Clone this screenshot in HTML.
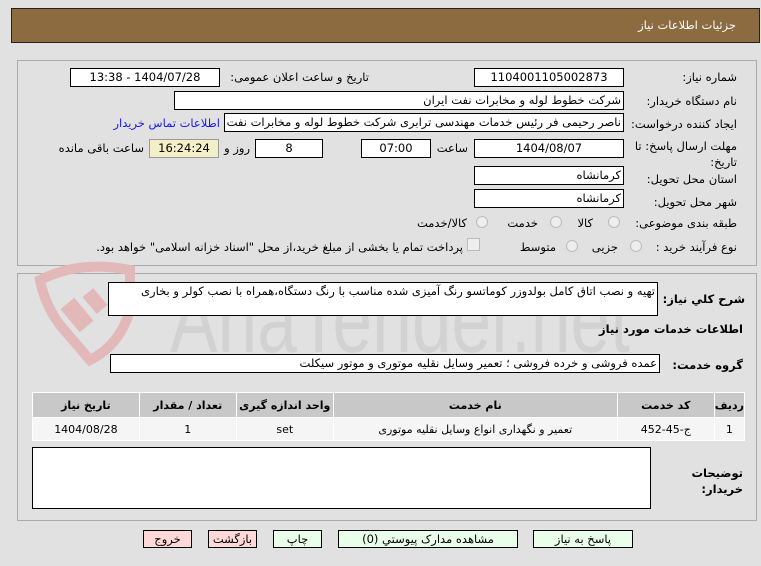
<!DOCTYPE html>
<html><head><meta charset="utf-8"><style>
body{margin:0;width:761px;height:566px;background:#e1e1e1;position:relative;overflow:hidden;font-family:Tahoma,"DejaVu Sans","Liberation Sans",sans-serif;font-size:11.5px;color:#000}
.a{position:absolute;white-space:nowrap}
.box{position:absolute;background:#fff;border:1px solid #000;box-sizing:border-box;direction:rtl;font-size:11.5px;line-height:16px;text-align:center;overflow:hidden;white-space:nowrap}
.l{position:absolute;direction:rtl;text-align:right;white-space:nowrap;font-size:11.5px}
.panel{position:absolute;border:1px solid #aaa;box-sizing:border-box}
.btn{position:absolute;border:1px solid #000;box-sizing:border-box;text-align:center;font-size:11.5px;line-height:16px;direction:rtl}
.rad{position:absolute;width:12px;height:12px;border-radius:50%;border:1px solid #bbb;background:#eee;box-sizing:border-box}
td{border:1px solid #fff;text-align:center;font-size:11px;padding:0}
</style></head><body>
<div class="a" style="left:11px;top:8px;width:749px;height:35px;background:#8c6b41;border:1px solid #222;box-sizing:border-box"></div>
<div class="l" style="right:25px;top:18px;color:#fff">جزئیات اطلاعات نیاز</div>

<div class="panel" style="left:17px;top:60px;width:740px;height:206px"></div>
<div class="panel" style="left:17px;top:273px;width:740px;height:248px"></div>

<!-- watermark -->
<svg class="a" style="left:20px;top:250px" width="640" height="120" viewBox="0 0 640 120">
<path d="M20 30 Q60 10 110 20 L110 60 Q100 95 70 110 L40 75 Q25 55 20 30Z" fill="none" stroke="#e3b8b8" stroke-width="10"/>
<rect x="48" y="50" width="18" height="30" fill="#e3b8b8" transform="rotate(-40 57 65)"/>
<rect x="68" y="40" width="14" height="22" fill="#e3b8b8" transform="rotate(-40 75 51)"/>
<text x="150" y="102" font-family="Liberation Sans" font-size="95" fill="#d2d2d2" textLength="460" lengthAdjust="spacingAndGlyphs">AriaTender.net</text>
</svg>

<div class="l" style="right:24px;top:70px">شماره نیاز:</div>
<div class="box" style="left:474px;top:68px;width:150px;height:19px">1104001105002873</div>
<div class="l" style="right:392px;top:70px">تاریخ و ساعت اعلان عمومی:</div>
<div class="box" style="left:70px;top:68px;width:150px;height:19px">1404/07/28 - 13:38</div>

<div class="l" style="right:24px;top:94px">نام دستگاه خریدار:</div>
<div class="box" style="left:174px;top:91px;width:450px;height:19px;text-align:right;padding-right:2px">شرکت خطوط لوله و مخابرات نفت ایران</div>

<div class="l" style="right:24px;top:117px">ایجاد کننده درخواست:</div>
<div class="box" style="left:224px;top:113px;width:400px;height:19px;text-align:right;padding-right:2px">ناصر رحیمی فر رئیس خدمات مهندسی ترابری شرکت خطوط لوله و مخابرات نفت</div>
<div class="l" style="right:541px;top:116px;color:#1a1aee">اطلاعات تماس خریدار</div>

<div class="l" style="right:24px;top:138px;line-height:16px">مهلت ارسال پاسخ: تا<br>تاریخ:</div>
<div class="box" style="left:474px;top:139px;width:150px;height:19px">1404/08/07</div>
<div class="l" style="right:293px;top:141px">ساعت</div>
<div class="box" style="left:361px;top:139px;width:70px;height:19px">07:00</div>
<div class="box" style="left:255px;top:139px;width:68px;height:19px">8</div>
<div class="l" style="right:511px;top:141px">روز و</div>
<div class="box" style="left:149px;top:139px;width:70px;height:19px;background:#f3f0c8;border-color:#999">16:24:24</div>
<div class="l" style="right:617px;top:141px">ساعت باقی مانده</div>

<div class="l" style="right:24px;top:172px">استان محل تحویل:</div>
<div class="box" style="left:474px;top:166px;width:150px;height:19px;text-align:right;padding-right:2px">کرمانشاه</div>
<div class="l" style="right:24px;top:195px">شهر محل تحویل:</div>
<div class="box" style="left:474px;top:189px;width:150px;height:19px;text-align:right;padding-right:2px">کرمانشاه</div>

<div class="l" style="right:24px;top:216px">طبقه بندی موضوعی:</div>
<div class="rad" style="left:608px;top:216px"></div><div class="l" style="right:168px;top:216px">کالا</div>
<div class="rad" style="left:550px;top:216px"></div><div class="l" style="right:223px;top:216px">خدمت</div>
<div class="rad" style="left:476px;top:216px"></div><div class="l" style="right:294px;top:216px">کالا/خدمت</div>

<div class="l" style="right:24px;top:240px">نوع فرآیند خرید :</div>
<div class="rad" style="left:630px;top:240px"></div><div class="l" style="right:143px;top:240px">جزیی</div>
<div class="rad" style="left:566px;top:240px"></div><div class="l" style="right:205px;top:240px">متوسط</div>
<div class="a" style="left:467px;top:238px;width:11px;height:11px;border:1px solid #bbb;background:#eee"></div>
<div class="l" style="right:298px;top:240px">پرداخت تمام یا بخشی از مبلغ خرید،از محل "اسناد خزانه اسلامی" خواهد بود.</div>

<div class="l" style="right:16px;top:292px;font-weight:bold">شرح کلي نیاز:</div>
<div class="box" style="left:108px;top:282px;width:550px;height:34px;text-align:right;padding-right:2px;background:#fff">تهیه و نصب اتاق کامل بولدوزر کوماتسو رنگ آمیزی شده مناسب با رنگ دستگاه،همراه با نصب کولر و بخاری</div>
<div class="l" style="right:18px;top:322px;font-weight:bold">اطلاعات خدمات مورد نیاز</div>
<div class="l" style="right:18px;top:358px;font-weight:bold">گروه خدمت:</div>
<div class="box" style="left:110px;top:354px;width:550px;height:19px;text-align:right;padding-right:2px">عمده فروشی و خرده فروشی ؛ تعمیر وسایل نقلیه موتوری و موتور سیکلت</div>

<table class="a" style="left:32px;top:392px;width:713px;height:49px;border-collapse:collapse;border:1px solid #bbb;direction:rtl;background:#f5f5f5">
<tr style="height:25px;background:#c8c8c8;font-weight:bold"><td style="width:29px">ردیف</td><td style="width:96px">کد خدمت</td><td style="width:283px">نام خدمت</td><td style="width:96px">واحد اندازه گیری</td><td style="width:96px">تعداد / مقدار</td><td>تاریخ نیاز</td></tr>
<tr><td>1</td><td>ج-45-452</td><td>تعمیر و نگهداری انواع وسایل نقلیه موتوری</td><td>set</td><td>1</td><td>1404/08/28</td></tr>
</table>

<div class="box" style="left:32px;top:447px;width:619px;height:62px"></div>
<div class="l" style="right:18px;top:465px;font-weight:bold;line-height:16px">توضیحات<br>خریدار:</div>

<div class="btn" style="left:533px;top:530px;width:100px;height:18px;background:#eaffea">پاسخ به نیاز</div>
<div class="btn" style="left:338px;top:530px;width:180px;height:18px;background:#eaffea">مشاهده مدارک پیوستي (0)</div>
<div class="btn" style="left:273px;top:530px;width:49px;height:18px;background:#eaffea">چاپ</div>
<div class="btn" style="left:208px;top:530px;width:49px;height:18px;background:#ffd8d8">بازگشت</div>
<div class="btn" style="left:143px;top:530px;width:49px;height:18px;background:#ffd8d8">خروج</div>
</body></html>
